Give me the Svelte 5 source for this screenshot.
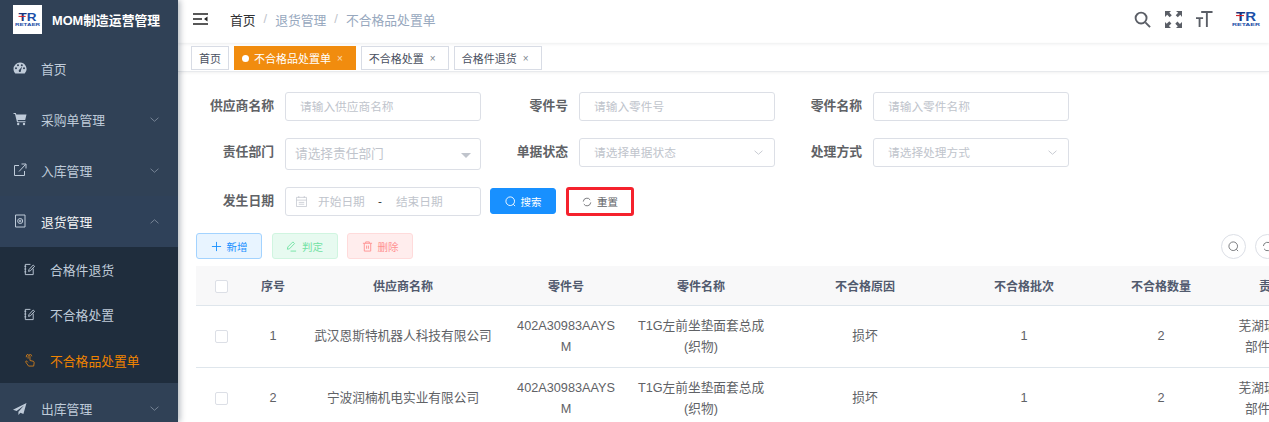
<script>
	const tags = [
		{ label: "不合格品处置单", active: true },
		{ label: "不合格处置" },
		{ label: "合格件退货" }
	];
	const columns = [
		{ label: "序号", width: 52 },
		{ label: "供应商名称", width: 208 },
		{ label: "零件号", width: 118 },
		{ label: "零件名称", width: 152 },
		{ label: "不合格原因", width: 176 },
		{ label: "不合格批次", width: 142 },
		{ label: "不合格数量", width: 132 },
		{ label: "责任部门", width: 112 }
	];
	const rows = [
		{ no: 1, supplier: "武汉恩斯特机器人科技有限公司" },
		{ no: 2, supplier: "宁波润楠机电实业有限公司" }
	];
</script>

{#snippet logo(cls)}
	<svg class={cls} viewBox="0 0 30 16">
		<text x="5" y="10" class="logo-t" textLength="20" lengthAdjust="spacingAndGlyphs">
			T<tspan class="logo-r">R</tspan>
		</text>
		<rect x="5" y="4" width="8" height="1.100" fill="#d8232a" />
		<text x="1" y="15" class="logo-sub" textLength="28" lengthAdjust="spacingAndGlyphs">RETAER</text>
	</svg>
{/snippet}

{#snippet chevron(up)}
	<svg class="chevron" viewBox="0 0 12 8">
		<path d={up ? "M1.500 6 6 2l4.500 4" : "M1.500 2 6 6l4.500-4"} />
	</svg>
{/snippet}

{#snippet noteIcon()}
	<svg class="menu-icon sub-icon" viewBox="0 0 14 14">
		<path d="M11 6v6.500H2.500V1.500H8M1.500 3.500h2M1.500 6.500h2M1.500 9.500h2" />
		<path d="M6 9l.5-2L11 2.200l1.500 1.400L8 8.400z" />
	</svg>
{/snippet}

<div class="layout">
	<aside class="sidebar">
		<div class="brand">
			<div class="brand-logo">{@render logo("logo-small")}</div>
			<span>MOM制造运营管理</span>
		</div>
		<nav>
			<div class="menu-item">
				<svg class="menu-icon" viewBox="0 0 14 12">
					<path class="solid" fill-rule="evenodd" d="M7 .5a6.500 6.500 0 0 0-6.500 6.500c0 1.800.7 3.400 1.800 4.500h9.400A6.500 6.500 0 0 0 7 .5zM3 7.200a1 1 0 1 1 0-2 1 1 0 0 1 0 2zm2-3a1 1 0 1 1 0-2 1 1 0 0 1 0 2zm3.800 0a1 1 0 1 1 0-2 1 1 0 0 1 0 2zM7 10a1.300 1.300 0 0 1-.8-2.300l3-3.200-1.300 3.900A1.300 1.300 0 0 1 7 10zm4-2.800a1 1 0 1 1 0-2 1 1 0 0 1 0 2z" />
				</svg>
				<span>首页</span>
			</div>
			<div class="menu-item">
				<svg class="menu-icon" viewBox="0 0 14 13">
					<path class="solid" d="M.5.500h2.300l.5 1.500h10.200l-1.300 5.500H4.700l.3 1.200h7.500v1.100H4L2 1.600H.5z" />
					<circle class="solid" cx="5.200" cy="11.500" r="1.200" />
					<circle class="solid" cx="11" cy="11.500" r="1.200" />
				</svg>
				<span>采购单管理</span>
				{@render chevron(false)}
			</div>
			<div class="menu-item">
				<svg class="menu-icon" viewBox="0 0 14 14">
					<path d="M6 2.500H1.500v10h10V8" />
					<path d="M6 8.500 12.500 1.500M8.500 1h4.500v4.500" />
				</svg>
				<span>入库管理</span>
				{@render chevron(false)}
			</div>
			<div class="menu-item open">
				<svg class="menu-icon" viewBox="0 0 14 14">
					<path d="M2.500 1h9.500v12H2.500z" />
					<circle cx="7.200" cy="7" r="2.500" />
					<circle cx="7.200" cy="7" r=".8" />
				</svg>
				<span>退货管理</span>
				{@render chevron(true)}
			</div>
			<div class="submenu">
				<div class="sub-item">{@render noteIcon()}<span>合格件退货</span></div>
				<div class="sub-item">{@render noteIcon()}<span>不合格处置</span></div>
				<div class="sub-item active">
					<svg class="menu-icon sub-icon" viewBox="0 0 14 14">
						<path d="M5.500 5V2.500a1 1 0 0 1 2 0V7l3.500.8c.8.200 1.200.9 1 1.700L11.500 13H6L3 8.800c-.5-.9.500-1.700 1.300-1l1.200 1.200" />
						<path d="M3.500 3.500a3 3 0 0 1 6-1" />
					</svg>
					<span>不合格品处置单</span>
				</div>
			</div>
			<div class="menu-item">
				<svg class="menu-icon" viewBox="0 0 14 13">
					<path class="solid" d="M13.500.500 0 7.200l3.600 1.300L11 3 5.400 9.300v3.200l2-2.200 3 1.200z" />
				</svg>
				<span>出库管理</span>
				{@render chevron(false)}
			</div>
		</nav>
	</aside>

	<main class="content">
		<header class="navbar">
			<svg class="hamburger" viewBox="0 0 15 12">
				<path d="M0 1h15M0 6h9M0 11h15" />
				<path class="fill" d="M14.500 3.500v5L11 6z" />
			</svg>
			<div class="crumbs">
				<span class="crumb-home">首页</span>
				<span class="sep">/</span>
				<span>退货管理</span>
				<span class="sep">/</span>
				<span>不合格品处置单</span>
			</div>
			<div class="nav-tools">
				<svg class="tool search" viewBox="0 0 18 18">
					<circle cx="7.500" cy="7.500" r="5.800" />
					<path d="m12 12 5 5" />
				</svg>
				<svg class="tool full" viewBox="0 0 17 17">
					<path class="fill" d="M0 0h6L4.300 1.700l2.500 2.500-2.100 2.100-2.500-2.500L0 6zM17 0v6l-1.700-2.200-2.500 2.500-2.100-2.100 2.500-2.500L11 0zM0 17v-6l1.700 1.800 2.600-2.500 2.100 2.100-2.500 2.500L6 17zM17 17h-6l1.800-1.700-2.500-2.600 2.100-2.100 2.500 2.500L17 11z" />
				</svg>
				<svg class="tool size" viewBox="0 0 18 18">
					<path d="M5.500 1h12M11.500 1v16M0 7.500h7.500M3.800 7.500V17" />
				</svg>
				{@render logo("logo-nav")}
			</div>
		</header>

		<div class="tags">
			<span class="tag">首页</span>
			{#each tags as tag}
				<span class="tag closable" class:active={tag.active}>
					{#if tag.active}<i class="dot"></i>{/if}
					{tag.label}
					<em>×</em>
				</span>
			{/each}
		</div>

		<section class="page">
			<form class="filters">
				<label for="f1">供应商名称</label>
				<div id="f1" class="field">请输入供应商名称</div>
				<label for="f2">零件号</label>
				<div id="f2" class="field">请输入零件号</div>
				<label for="f3">零件名称</label>
				<div id="f3" class="field">请输入零件名称</div>

				<label for="f4">责任部门</label>
				<div id="f4" class="field tall">
					请选择责任部门
					<i class="caret"></i>
				</div>
				<label for="f5">单据状态</label>
				<div id="f5" class="field">
					请选择单据状态
					<span class="field-chevron">{@render chevron(false)}</span>
				</div>
				<label for="f6">处理方式</label>
				<div id="f6" class="field">
					请选择处理方式
					<span class="field-chevron">{@render chevron(false)}</span>
				</div>

				<label for="f7">发生日期</label>
				<div id="f7" class="field date">
					<svg viewBox="0 0 12 12">
						<path d="M.5 1.500h11v10H.5zM.5 4.500h11M3 0v2M9 0v2M3 7h6M3 9h6" />
					</svg>
					<span class="date-text">开始日期</span>
					<span class="date-sep">-</span>
					<span class="date-text">结束日期</span>
				</div>
				<div class="actions">
					<button type="button" class="btn primary">
						<svg viewBox="0 0 12 12"><circle cx="5.700" cy="5.700" r="4.700" /><path d="m9 9 2 2" /></svg>
						搜索
					</button>
					<button type="button" class="btn reset">
						<svg viewBox="0 0 12 12"><path d="M1.500 5.500A4.500 4.500 0 0 1 9.800 3.500M10.500 6.500A4.500 4.500 0 0 1 2.200 8.500" /></svg>
						重置
					</button>
				</div>
			</form>

			<div class="toolbar">
				<button type="button" class="btn small add">
					<svg viewBox="0 0 12 12"><path d="M6 1v10M1 6h10" /></svg>
					新增
				</button>
				<button type="button" class="btn small judge">
					<svg viewBox="0 0 12 12"><path d="m1.500 9 .5-2.500L7.500 1 9.300 2.800 3.800 8.500zM5 11h6" /></svg>
					判定
				</button>
				<button type="button" class="btn small remove">
					<svg viewBox="0 0 12 12"><path d="M1 2.500h10M4 2.500V1h4v1.500M2.500 2.500V11h7V2.500M5 5v3.500M7 5v3.500" /></svg>
					删除
				</button>
				<div class="round-tools">
					<span class="round">
						<svg viewBox="0 0 12 12"><circle cx="5.700" cy="5.700" r="4.700" /><path d="m9 9 2 2" /></svg>
					</span>
					<span class="round">
						<svg viewBox="0 0 12 12"><path d="M1.500 5.500A4.500 4.500 0 0 1 9.800 3.500M10.500 6.500A4.500 4.500 0 0 1 2.200 8.500" /></svg>
					</span>
				</div>
			</div>

			<table>
				<colgroup>
					<col style="width: 51px" />
					{#each columns as col}
						<col style="width: {col.width}px" />
					{/each}
				</colgroup>
				<thead>
					<tr>
						<th><i class="check"></i></th>
						{#each columns as col}
							<th>{col.label}</th>
						{/each}
					</tr>
				</thead>
				<tbody>
					{#each rows as row}
						<tr>
							<td><i class="check"></i></td>
							<td>{row.no}</td>
							<td>{row.supplier}</td>
							<td class="part">402A30983AAYSM</td>
							<td>T1G左前坐垫面套总成<br />(织物)</td>
							<td>损坏</td>
							<td>1</td>
							<td>2</td>
							<td>芜湖瑞泰汽车零部件有限公司</td>
						</tr>
					{/each}
				</tbody>
			</table>
		</section>
	</main>
</div>

<style>
	:global(body) {
		margin: 0;
		background: #fff;
		font-family: "Liberation Sans", "Noto Sans CJK SC", sans-serif;
		overflow: hidden;
	}
	svg {
		display: block;
		fill: none;
		stroke: currentColor;
	}
	.layout {
		display: flex;
		width: 1269px;
		height: 422px;
		overflow: hidden;
	}

	/* sidebar */
	.sidebar {
		width: 178px;
		flex: none;
		height: 100%;
		overflow: hidden;
		background: #304156;
		box-shadow: 2px 0 6px rgba(0, 21, 41, 0.3);
		position: relative;
		z-index: 2;
	}
	.brand {
		display: flex;
		align-items: center;
		gap: 10px;
		height: 42.500px;
		padding: 0 0 3px 13px;
		box-sizing: border-box;
		color: #fff;
		font-size: 12.800px;
		font-weight: 700;
	}
	.brand-logo {
		width: 29px;
		height: 29px;
		background: #fff;
		display: flex;
		align-items: center;
		justify-content: center;
	}
	.logo-small {
		width: 27px;
		height: 15px;
		stroke: none;
	}
	.logo-t {
		font: 700 12px "Liberation Sans", sans-serif;
		fill: #16357e;
		stroke: none;
	}
	.logo-r {
		fill: #1c4fa8;
	}
	.logo-sub {
		font: 700 4.400px "Liberation Sans", sans-serif;
		fill: #1c4fa8;
		stroke: none;
	}
	.menu-item {
		height: 51px;
		display: flex;
		align-items: center;
		padding-left: 13px;
		font-size: 12.800px;
		color: #bfcbd9;
		position: relative;
	}
	.menu-item.open {
		color: #f4f4f5;
		background: #2f4159;
	}
	.menu-icon {
		width: 14px;
		height: 14px;
		margin-right: 14px;
		flex: none;
		stroke-width: 1;
		color: #bfcbd9;
	}
	.menu-icon .solid {
		fill: currentColor;
		stroke: none;
	}
	.chevron {
		width: 11px;
		height: 7px;
		stroke: #7f8c9d;
		stroke-width: 1;
	}
	.menu-item .chevron {
		position: absolute;
		right: 18px;
		top: 22px;
	}
	.submenu {
		background: #1f2d3d;
	}
	.sub-item {
		height: 45.670px;
		display: flex;
		align-items: center;
		padding-left: 23px;
		font-size: 12.800px;
		color: #bfcbd9;
	}
	.sub-icon {
		width: 13px;
		height: 13px;
		margin-right: 14px;
	}
	.sub-item.active {
		color: #f08300;
	}
	.sub-item.active .menu-icon {
		color: #c87a1c;
	}

	/* top bar */
	.content {
		flex: 1;
		min-width: 0;
	}
	.navbar {
		height: 43px;
		display: flex;
		align-items: center;
		padding-left: 15px;
		box-sizing: border-box;
		box-shadow: 0 1px 3px rgba(0, 21, 41, 0.08);
	}
	.hamburger {
		width: 15px;
		height: 12px;
		stroke: #222;
		stroke-width: 1.400;
		margin: 0 22px 5px 0;
	}
	.hamburger .fill {
		fill: #222;
		stroke: none;
	}
	.crumbs {
		display: flex;
		gap: 8px;
		font-size: 12.800px;
		color: #97a8be;
		padding-bottom: 5px;
	}
	.crumb-home {
		color: #303133;
	}
	.sep {
		color: #c0c4cc;
		padding-top: 1px;
	}
	.nav-tools {
		margin-left: auto;
		display: flex;
		align-items: center;
		color: #5a5e66;
		padding-bottom: 5px;
	}
	.tool {
		width: 17px;
		height: 17px;
		stroke-width: 2;
		margin-right: 14px;
	}
	.size {
		margin-right: 18px;
	}
	.tool .fill {
		fill: currentColor;
		stroke: none;
	}
	.logo-nav {
		width: 30px;
		height: 16px;
		margin-right: 8px;
		stroke: none;
	}

	/* tag row */
	.tags {
		height: 29px;
		display: flex;
		align-items: flex-start;
		gap: 5px;
		padding: 3px 0 0 13px;
		box-sizing: border-box;
		border-bottom: 1px solid #e8eaed;
		box-shadow: 0 1px 3px rgba(0, 0, 0, 0.06);
	}
	.tag {
		height: 24px;
		padding: 0 7px;
		box-sizing: border-box;
		display: flex;
		align-items: center;
		border: 1px solid #d8dce5;
		font-size: 11px;
		color: #495060;
		background: #fff;
	}
	.tag.closable {
		padding-right: 11px;
	}
	.tag.active {
		background: #f18c0e;
		border-color: #f18c0e;
		color: #fff;
	}
	.dot {
		width: 7px;
		height: 7px;
		border-radius: 50%;
		background: #fff;
		margin-right: 5px;
	}
	.tag em {
		font-style: normal;
		font-size: 10px;
		margin: 1px 0 0 5px;
		opacity: 0.7;
		padding: 0 1px;
	}

	/* search form */
	.page {
		padding: 20px 0 0 18px;
	}
	.filters {
		display: grid;
		grid-template-columns: 89px 196px 98px 196px 98px 196px;
		align-items: start;
		row-gap: 17px;
	}
	label {
		height: 29px;
		line-height: 27px;
		font-size: 12.800px;
		font-weight: 700;
		color: #606266;
		text-align: right;
		padding-right: 11px;
	}
	.field {
		width: 196px;
		height: 29px;
		box-sizing: border-box;
		border: 1px solid #dcdfe6;
		border-radius: 3px;
		padding: 0 0 3px 14px;
		display: flex;
		align-items: center;
		font-size: 11.700px;
		color: #c0c4cc;
		position: relative;
	}
	.field.tall {
		height: 32px;
		font-size: 12.700px;
		padding-left: 9px;
	}
	.caret {
		position: absolute;
		right: 9px;
		top: 14px;
		border: 5px solid transparent;
		border-top-color: #c0c4cc;
		border-bottom: 0;
	}
	.field-chevron {
		position: absolute;
		right: 10px;
		top: 10px;
	}
	.field-chevron .chevron {
		stroke: #c0c4cc;
	}
	.date svg {
		width: 11px;
		height: 11px;
		stroke: #c0c4cc;
		stroke-width: 0.8;
		margin: 2px 11px 0 -4px;
	}
	.date-text {
		width: 47px;
	}
	.date-sep {
		color: #303133;
		margin: 0 14px 0 13px;
	}
	.actions {
		grid-column: span 4;
		display: flex;
		gap: 10px;
		padding: 1px 0 0 9px;
	}
	.btn {
		display: flex;
		align-items: center;
		justify-content: center;
		gap: 5px;
		font: inherit;
		font-size: 10.500px;
		border-radius: 3px;
		padding: 0;
		background: #fff;
	}
	.btn svg {
		width: 11px;
		height: 11px;
		stroke-width: 1;
	}
	.primary {
		width: 66px;
		height: 26px;
		background: #1890ff;
		border: 1px solid #1890ff;
		color: #fff;
	}
	.reset {
		width: 68px;
		height: 29px;
		border: 3px solid #f5222d;
		color: #606266;
		margin-top: -1px;
		box-sizing: border-box;
	}
	.reset svg {
		width: 10px;
		height: 10px;
	}

	/* table toolbar */
	.toolbar {
		display: flex;
		align-items: center;
		gap: 9.500px;
		margin-top: 17px;
		height: 26px;
	}
	.small {
		width: 66px;
		height: 26px;
	}
	.add {
		background: #e8f4ff;
		border: 1px solid #a3d3ff;
		color: #1890ff;
	}
	.judge {
		background: #e7faf0;
		border: 1px solid #d0f5e0;
		color: #71e2a3;
	}
	.remove {
		background: #ffeded;
		border: 1px solid #ffdbdb;
		color: #ff9292;
	}
	.round-tools {
		position: absolute;
		left: 1221px;
		display: flex;
		gap: 9px;
	}
	.round {
		width: 25px;
		height: 25px;
		flex: none;
		box-sizing: border-box;
		border: 1px solid #dcdfe6;
		border-radius: 50%;
		display: flex;
		align-items: center;
		justify-content: center;
		color: #606266;
	}
	.round svg {
		width: 11px;
		height: 11px;
		stroke-width: 0.9;
	}

	/* table */
	table {
		border-collapse: collapse;
		table-layout: fixed;
		width: 1143px;
		margin-top: 7px;
		font-size: 12.700px;
	}
	th {
		height: 39px;
		padding: 0;
		background: #f8f8f9;
		color: #515a6e;
		font-size: 12px;
		font-weight: 700;
		border-bottom: 1px solid #dfe6ec;
		text-align: center;
	}
	td {
		height: 61px;
		padding: 0 10px;
		color: #606266;
		line-height: 21px;
		text-align: center;
		border-bottom: 1px solid #dfe6ec;
	}
	.part {
		word-break: break-all;
	}
	.check {
		display: inline-block;
		width: 13px;
		height: 13px;
		box-sizing: border-box;
		border: 1px solid #dcdfe6;
		border-radius: 2px;
		background: #fff;
		vertical-align: middle;
	}
</style>
